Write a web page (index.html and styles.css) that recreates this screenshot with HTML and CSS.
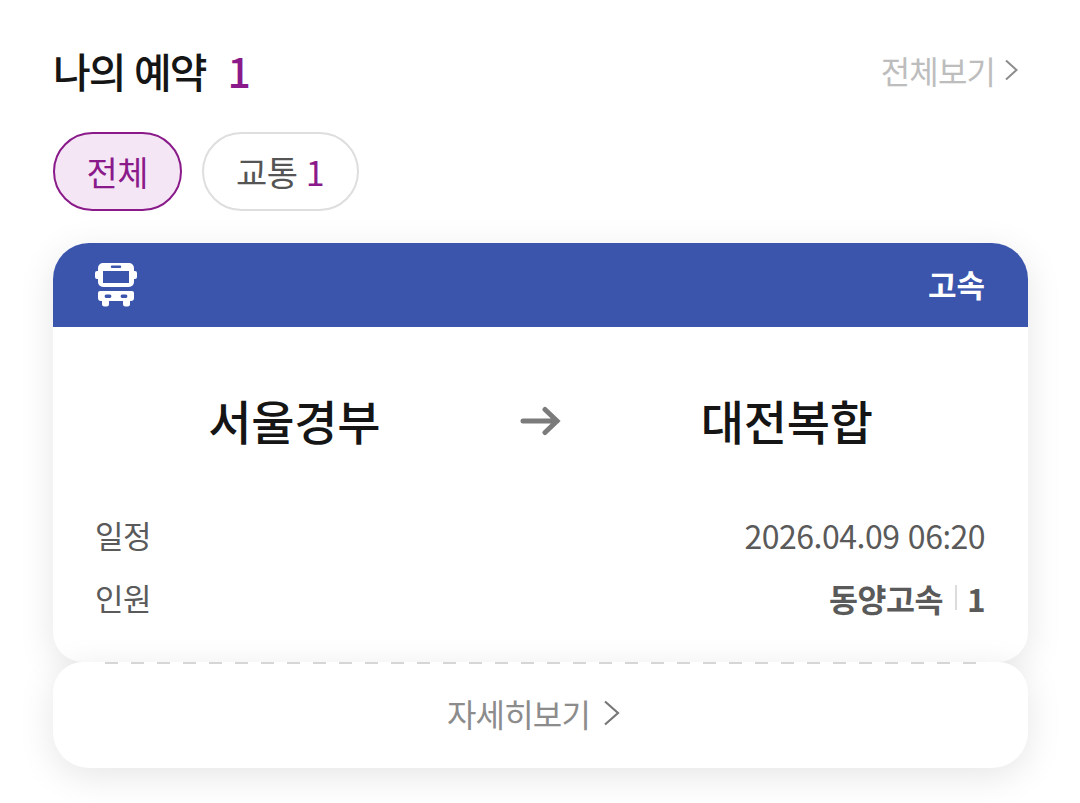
FILE: index.html
```html
<!DOCTYPE html>
<html lang="ko">
<head>
    <meta charset="UTF-8">
    <meta name="viewport" content="width=device-width, initial-scale=1.0">
    <title>나의 예약</title>
    <link rel="stylesheet" href="styles.css">
</head>
<body>

    <div class="container">
        <div class="section-head">
            <h1>나의 예약<span class="count">1</span></h1>
            <a class="more">전체보기
                <svg width="14" height="24" viewBox="0 0 14 24"><path d="M2 2.5 12.5 12 2 21.5" fill="none" stroke="#8c8c8c" stroke-width="2"/></svg>
            </a>
        </div>

        <div class="tabs">
            <div class="tab tab-active">전체</div>
            <div class="tab">교통 <span class="tab-count">1</span></div>
        </div>

        <div class="ticket">
            <div class="ticket-top">
                <div class="ticket-head">
                    <!-- bus icon -->
                    <svg class="bus" width="42" height="44" viewBox="0 0 42 44">
                        <path fill="#fff" fill-rule="evenodd" d="M8 0h26a5 5 0 0 1 5 5v3h1a2 2 0 0 1 2 2v4a2 2 0 0 1-2 2h-1v3a5 5 0 0 1-5 5H8a5 5 0 0 1-5-5v-3H2a2 2 0 0 1-2-2v-4a2 2 0 0 1 2-2h1V5a5 5 0 0 1 5-5ZM8 8v12h26V8ZM17 2.500a1.200 1.200 0 0 0 0 2.500h8a1.200 1.200 0 0 0 0-2.500Z"/>
                        <path fill="#fff" fill-rule="evenodd" d="M5 28h32a2 2 0 0 1 2 2v5a3 3 0 0 1-3 3h-1v3a2.500 2.500 0 0 1-2.500 2.500h-2A2.500 2.500 0 0 1 28 41v-3H14v3a2.500 2.500 0 0 1-2.500 2.500h-2A2.500 2.500 0 0 1 7 41v-3H6a3 3 0 0 1-3-3v-5a2 2 0 0 1 2-2Zm6 3.500a1.800 1.800 0 0 0 0 3.500h4a1.800 1.800 0 0 0 0-3.500Zm16 0a1.800 1.800 0 0 0 0 3.500h4a1.800 1.800 0 0 0 0-3.500Z"/>
                    </svg>
                    <span class="ticket-type">고속</span>
                </div>
                <div class="route">
                    <div class="place">서울경부</div>
                    <svg width="42" height="32" viewBox="0 0 42 32"><path d="M3 17h34M25 5.500 37 17 25 28.500" fill="none" stroke="#7b7b7b" stroke-width="5" stroke-linecap="round"/></svg>
                    <div class="place">대전복합</div>
                </div>
                <div class="info-row">
                    <span class="label">일정</span>
                    <span>2026.04.09 06<span class="colon">:</span>20</span>
                </div>
                <div class="info-row">
                    <span class="label">인원</span>
                    <span class="company">동양고속<i class="divider"></i>1</span>
                </div>
            </div>
            <div class="ticket-bottom">
                <div class="dash"></div>
                <a class="detail">자세히보기
                    <svg width="17" height="28" viewBox="0 0 17 28"><path d="M2 2.500 15 14 2 25.500" fill="none" stroke="#777" stroke-width="2.200"/></svg>
                </a>
            </div>
        </div>
    </div>

</body>
</html>
```

FILE: styles.css
```css
body {
    font-family: "Noto Sans CJK KR", "Noto Sans", sans-serif;
    background-color: #fff;
    margin: 0;
    padding: 0;
    height: 803px;
    overflow: hidden;
}
.container {
    padding: 0 52px 0 53px;
}
.section-head {
    display: flex;
    justify-content: space-between;
    align-items: center;
    height: 132px;
    padding-top: 8px;
    box-sizing: border-box;
}
h1 {
    margin: 0;
    font-size: 41px;
    font-weight: 500;
    letter-spacing: -2px;
    color: #151515;
}
.count {
    margin-left: 22px;
    color: #8a1a8a;
    letter-spacing: 0;
}
.more {
    display: flex;
    align-items: center;
    gap: 9px;
    margin-right: 10px;
    font-size: 32px;
    letter-spacing: -0.9px;
    color: #bdbdbd;
}
.tabs {
    display: flex;
    gap: 20px;
}
.tab {
    height: 79px;
    box-sizing: border-box;
    padding: 0 32.5px;
    display: flex;
    align-items: center;
    gap: 8px;
    border: 2px solid #dedede;
    border-radius: 40px;
    font-size: 34px;
    letter-spacing: -0.5px;
    color: #555;
}
.tab-active {
    padding: 0 31.5px;
    background-color: #f5e6f5;
    border-color: #8a1a8a;
    color: #8a1a8a;
}
.tab-count {
    color: #8a1a8a;
}
.ticket {
    margin-top: 32px;
}
.ticket-top {
    height: 419px;
    background-color: #fff;
    border-radius: 36px 36px 30px 30px;
    overflow: hidden;
    box-shadow: 0 8px 36px rgba(0, 0, 0, 0.1);
}
.ticket-head {
    height: 84px;
    background-color: #3b55ad;
    padding: 0 43px 0 42px;
    display: flex;
    justify-content: space-between;
    align-items: center;
}
.ticket-type {
    color: #fff;
    font-size: 31px;
    font-weight: 700;
    padding-bottom: 4px;
}
.route {
    display: grid;
    grid-template-columns: 1fr 42px 1fr;
    align-items: center;
    margin-top: 58px;
    height: 62px;
    padding: 0 16px;
}
.place {
    text-align: center;
    font-size: 47px;
    font-weight: 500;
    letter-spacing: -0.3px;
    color: #151515;
}
.info-row {
    display: flex;
    justify-content: space-between;
    align-items: center;
    height: 63px;
    padding: 0 43px 0 42px;
    font-size: 32px;
    letter-spacing: -0.5px;
    color: #5a5a5a;
}
.route + .info-row {
    margin-top: 56px;
}
.label {
    font-size: 31px;
}
.colon {
    font-family: "Noto Sans", sans-serif;
}
.company {
    display: flex;
    align-items: center;
    font-weight: 700;
    font-size: 31.5px;
}
.divider {
    width: 2px;
    height: 25px;
    margin: 0 10px 0 12px;
    background-color: #dcdcdc;
}
.ticket-bottom {
    position: relative;
    height: 106px;
    background-color: #fff;
    border-radius: 30px 30px 36px 36px;
    box-shadow: 0 8px 36px rgba(0, 0, 0, 0.1);
}
.dash {
    position: absolute;
    top: 0;
    left: 52px;
    right: 52px;
    height: 2px;
    background-image: repeating-linear-gradient(to right, #d6d6d6 0 13px, transparent 13px 26px);
}
.detail {
    height: 100%;
    box-sizing: border-box;
    padding: 0 14px 4px 0;
    display: flex;
    justify-content: center;
    align-items: center;
    gap: 13px;
    font-size: 32px;
    letter-spacing: -0.8px;
    color: #8c8c8c;
}
```
